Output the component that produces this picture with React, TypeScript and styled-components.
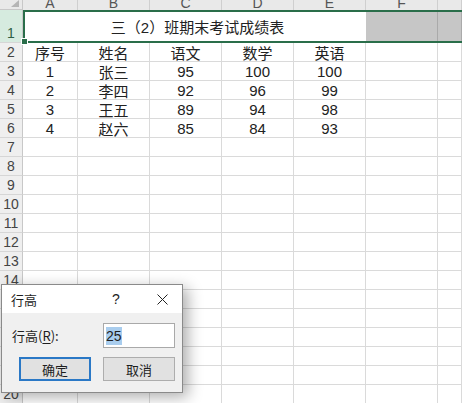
import React from 'react';
import styled, { createGlobalStyle } from 'styled-components';

const GlobalStyle = createGlobalStyle`
  html, body {
    margin: 0;
    padding: 0;
    background: #fff;
    overflow: hidden;
  }
  body {
    font-family: "Liberation Sans", "Noto Sans CJK SC", sans-serif;
  }
`;

const Page = styled.div`
  position: relative;
  width: 462px;
  height: 403px;
  overflow: hidden;
  background: #fff;
`;

const Sheet = styled.div`
  display: grid;
  grid-template-columns: 23px 55px repeat(5, 72px) 1fr;
  grid-template-rows: 10px 33px repeat(19, 19px);
  font-size: 15px;
  color: #222;
`;

const Corner = styled.div`
  background: #e9e9e9;
  border-right: 1px solid #c8c8c8;
  border-bottom: 1px solid #c8c8c8;
  box-sizing: border-box;
  display: flex;
  justify-content: flex-end;
  align-items: flex-start;
  padding-right: 3px;
`;

const ColHeader = styled.div`
  background: #e9e9e9;
  border-right: 1px solid #cfcfcf;
  box-sizing: border-box;
  overflow: hidden;
  display: flex;
  justify-content: center;
  align-items: flex-end;
  font-size: 14px;
  line-height: 14px;
  color: #555;
  padding-bottom: 0;
`;

const RowHeader = styled.div<{ $active?: boolean }>`
  background: ${(p) => (p.$active ? '#d6ebdf' : '#efefef')};
  border-right: 1px solid #c8c8c8;
  border-bottom: 1px solid #d6d6d6;
  box-sizing: border-box;
  display: flex;
  justify-content: center;
  align-items: ${(p) => (p.$active ? 'flex-end' : 'center')};
  font-size: 14px;
  color: ${(p) => (p.$active ? '#2f5f45' : '#444')};
  padding-bottom: ${(p) => (p.$active ? '1px' : '0')};
`;

const Cell = styled.div`
  border-right: 1px solid #dadada;
  border-bottom: 1px solid #dadada;
  box-sizing: border-box;
  display: flex;
  justify-content: center;
  align-items: center;
  padding-top: 1px;
  white-space: nowrap;
`;

const SelectedBand = styled.div`
  grid-column: 2 / -1;
  position: relative;
  display: flex;
  border-top: 2px solid #2a6e4a;
  border-bottom: 2px solid #2a6e4a;
  border-left: 2px solid #2a6e4a;
  box-sizing: border-box;
`;

const TitleCell = styled.div`
  width: 341px;
  background: #fff;
  display: flex;
  justify-content: center;
  align-items: center;
  font-size: 15px;
  color: #222;
  padding-left: 4px;
  box-sizing: border-box;
`;

const ShadedCell = styled.div<{ $grow?: boolean }>`
  background: #c6c6c6;
  border-right: 1px solid #aaaaaa;
  box-sizing: border-box;
  ${(p) => (p.$grow ? 'flex: 1;' : 'width: 72px;')}
`;

const FillHandle = styled.div`
  position: absolute;
  left: -4px;
  bottom: -4px;
  width: 5px;
  height: 5px;
  background: #2a6e4a;
  border: 1px solid #fff;
`;

const Dialog = styled.div`
  position: absolute;
  left: 1px;
  top: 284px;
  width: 182px;
  height: 109px;
  box-sizing: border-box;
  border: 1px solid #8a8a8a;
  background: #f0f0f0;
  box-shadow: 5px 4px 14px rgba(0, 0, 0, 0.32);
  font-family: "Noto Sans CJK SC", sans-serif;
  font-size: 13px;
  color: #1e1e1e;
  display: flex;
  flex-direction: column;
`;

const TitleBar = styled.div`
  height: 28px;
  background: #fff;
  display: flex;
  align-items: center;
  padding-left: 9px;
`;

const DialogTitle = styled.span`
  flex: 1;
`;

const HelpMark = styled.span`
  width: 12px;
  margin-right: 34px;
  text-align: center;
  font-family: "Liberation Sans", sans-serif;
  font-size: 14px;
`;

const CloseBtn = styled.span`
  width: 12px;
  margin-right: 14px;
  display: flex;
  justify-content: center;
`;

const Body = styled.div`
  flex: 1;
  padding: 10px 0 0 10px;
  display: flex;
  flex-direction: column;
  gap: 9px;
`;

const Field = styled.div`
  display: flex;
  align-items: center;
`;

const Label = styled.label`
  width: 91px;
  u {
    text-underline-offset: 2px;
  }
`;

const Input = styled.div`
  width: 72px;
  height: 25px;
  box-sizing: border-box;
  background: #fff;
  border: 1px solid #a9a9a9;
  display: flex;
  align-items: center;
  padding-left: 2px;
  font-family: "Liberation Sans", sans-serif;
  font-size: 14px;
`;

const Selection = styled.span`
  background: #a9cdee;
  padding: 1px 0;
`;

const Buttons = styled.div`
  display: flex;
  gap: 12px;
  padding-left: 7px;
`;

const Button = styled.div<{ $primary?: boolean }>`
  width: 72px;
  height: 24px;
  box-sizing: border-box;
  background: #e1e1e1;
  border: ${(p) => (p.$primary ? '2px solid #2a78c6' : '1px solid #adadad')};
  display: flex;
  justify-content: center;
  align-items: center;
`;

const letters = ['A', 'B', 'C', 'D', 'E', 'F', ''];

const data = [
  ['序号', '姓名', '语文', '数学', '英语'],
  ['1', '张三', '95', '100', '100'],
  ['2', '李四', '92', '96', '99'],
  ['3', '王五', '89', '94', '98'],
  ['4', '赵六', '85', '84', '93'],
];

export default function App() {
  const rows: string[][] = [];
  for (let i = 0; i < 19; i++) {
    rows.push(data[i] ? [...data[i], '', ''] : ['', '', '', '', '', '', '']);
  }

  return (
    <Page>
      <GlobalStyle />
      <Sheet>
        <Corner>
          <svg width="8" height="7" viewBox="0 0 8 7">
            <polygon points="8,0 8,7 0,7" fill="#b5b5b5" />
          </svg>
        </Corner>
        {letters.map((l, i) => (
          <ColHeader key={i}>{l}</ColHeader>
        ))}

        <RowHeader $active>1</RowHeader>
        <SelectedBand>
          <TitleCell>三（2）班期末考试成绩表</TitleCell>
          <ShadedCell />
          <ShadedCell $grow />
          <FillHandle />
        </SelectedBand>

        {rows.map((r, i) => (
          <React.Fragment key={i}>
            <RowHeader>{i + 2}</RowHeader>
            {r.map((v, j) => (
              <Cell key={j}>{v}</Cell>
            ))}
          </React.Fragment>
        ))}
      </Sheet>

      <Dialog>
        <TitleBar>
          <DialogTitle>行高</DialogTitle>
          <HelpMark>?</HelpMark>
          <CloseBtn>
            <svg width="11" height="11" viewBox="0 0 11 11">
              <path d="M0.5 0.5 L10.5 10.5 M10.5 0.5 L0.5 10.5" stroke="#222" strokeWidth="1" />
            </svg>
          </CloseBtn>
        </TitleBar>
        <Body>
          <Field>
            <Label>
              行高(<u>R</u>):
            </Label>
            <Input>
              <Selection>25</Selection>
            </Input>
          </Field>
          <Buttons>
            <Button $primary>确定</Button>
            <Button>取消</Button>
          </Buttons>
        </Body>
      </Dialog>
    </Page>
  );
}
